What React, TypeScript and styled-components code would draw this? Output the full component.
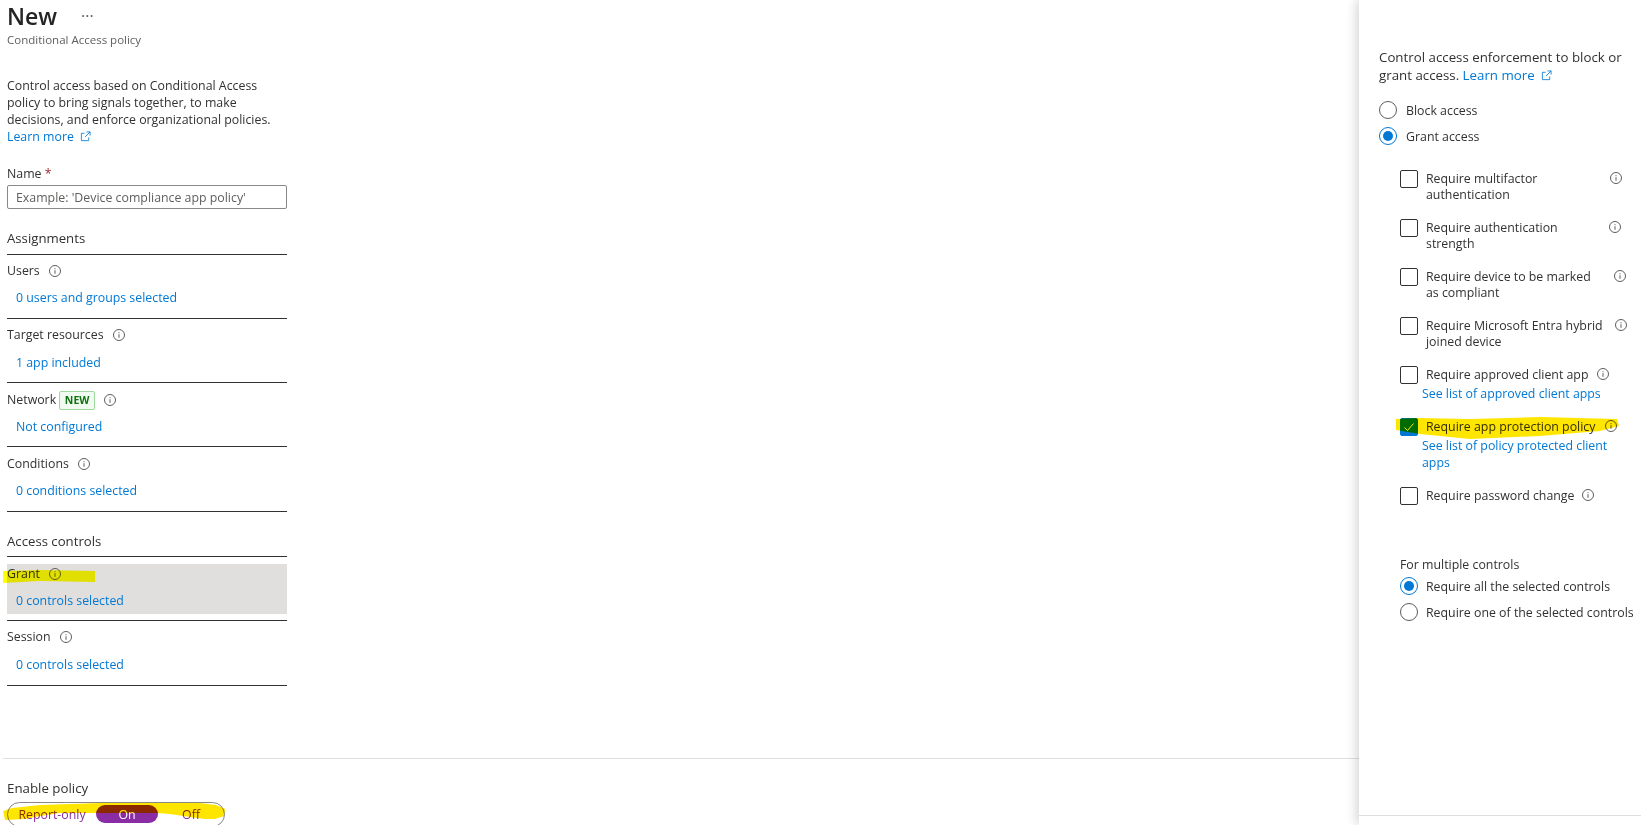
import styled, { createGlobalStyle } from 'styled-components';

const GlobalStyle = createGlobalStyle`
  html, body {
    margin: 0;
    padding: 0;
    height: 100%;
    background: #fff;
  }
  body {
    font-family: "Open Sans", "Noto Sans", sans-serif;
    font-size: 12.35px;
    color: #323130;
    overflow: hidden;
  }
`;

const InfoIcon = () => (
   <InfoSvg viewBox="0 0 12 12">
      <circle cx="6" cy="6" r="5.5" fill="none" stroke="#605e5c" strokeWidth="1" />
      <rect x="5.5" y="5.2" width="1" height="3.6" fill="#605e5c" />
      <rect x="5.5" y="3.2" width="1" height="1" fill="#605e5c" />
   </InfoSvg>
);

const ExternalIcon = () => (
   <ExternalSvg viewBox="0 0 12 12">
      <path
         d="M5 2.5H1.5v8h8V7M7 1h4v4M11 1 5.5 6.5"
         fill="none"
         stroke="#0078d4"
         strokeWidth="0.9"
      />
   </ExternalSvg>
);

const Row = ({ label, value, selected, badge, tall, lift }: {
   label: string;
   value: string;
   selected?: boolean;
   badge?: boolean;
   tall?: boolean;
   lift?: 'label' | 'both';
}) => (
   <SectionRow $tall={tall}>
      <SectionInner $selected={selected} $lifted={!!lift}>
         <RowLabel>
            <span>{label}</span>
            {badge && <NewBadge>NEW</NewBadge>}
            <RowInfo><InfoIcon /></RowInfo>
         </RowLabel>
         <RowValue $wide={lift === 'label'}>{value}</RowValue>
      </SectionInner>
   </SectionRow>
);

const CheckRow = ({ label, width, checked, link }: {
   label: string;
   width: number;
   checked?: boolean;
   link?: string;
}) => (
   <CheckItem>
      <CheckTop>
         <CheckBox $checked={checked}>
            {checked && (
               <svg width="12" height="12" viewBox="0 0 12 12">
                  <path d="M1.5 6.5 4.5 9.5 10.5 2.5" fill="none" stroke="#fff" strokeWidth="1" />
               </svg>
            )}
         </CheckBox>
         <CheckLabel $width={width}>{label}</CheckLabel>
         <CheckInfo><InfoIcon /></CheckInfo>
      </CheckTop>
      {link && <CheckLink>{link}</CheckLink>}
   </CheckItem>
);

const Radio = ({ label, on, loose }: { label: string; on?: boolean; loose?: boolean }) => (
   <RadioRow $loose={loose}>
      <RadioDot $on={on} />
      <span>{label}</span>
   </RadioRow>
);

export default function App() {
   return (
      <Page>
         <GlobalStyle />
         <Main>
            <Content>
               <TitleRow>
                  <Title>New</Title>
                  <More>···</More>
               </TitleRow>
               <Subtitle>Conditional Access policy</Subtitle>
               <Description>
                  Control access based on Conditional Access
                  <br />
                  policy to bring signals together, to make
                  <br />
                  decisions, and enforce organizational policies.
                  <br />
                  <LinkText>Learn more</LinkText>
                  <ExternalIcon />
               </Description>
               <NameLabel>
                  Name <Required>*</Required>
               </NameLabel>
               <NameInput placeholder="Example: 'Device compliance app policy'" />
               <GroupHeading>Assignments</GroupHeading>
               <Row label="Users" value="0 users and groups selected" lift="both" />
               <Row label="Target resources" value="1 app included" lift="label" />
               <Row label="Network" value="Not configured" badge />
               <Row label="Conditions" value="0 conditions selected" tall />
               <GroupHeading $tight>Access controls</GroupHeading>
               <Row label="Grant" value="0 controls selected" selected />
               <Row label="Session" value="0 controls selected" tall lift="label" />
            </Content>
            <Footer>
               <FooterLabel>Enable policy</FooterLabel>
               <PolicyToggle>
                  <ToggleOption $w={88}>Report-only</ToggleOption>
                  <ToggleOption $w={62} $active>On</ToggleOption>
                  <ToggleOption $w={66}>Off</ToggleOption>
               </PolicyToggle>
            </Footer>
         </Main>

         <Panel>
            <PanelBody>
               <PanelIntro>
                  Control access enforcement to block or
                  <br />
                  grant access. <LinkText>Learn more</LinkText>
                  <ExternalIcon />
               </PanelIntro>
               <RadioGroup>
                  <Radio label="Block access" loose />
                  <Radio label="Grant access" on loose />
               </RadioGroup>
               <CheckList>
                  <CheckRow label={'Require multifactor\nauthentication'} width={184} />
                  <CheckRow label={'Require authentication\nstrength'} width={183} />
                  <CheckRow label={'Require device to be marked\nas compliant'} width={188} />
                  <CheckRow label={'Require Microsoft Entra hybrid\njoined device'} width={189} />
                  <CheckRow
                     label="Require approved client app"
                     width={171}
                     link="See list of approved client apps"
                  />
                  <CheckRow
                     label="Require app protection policy"
                     width={179}
                     checked
                     link="See list of policy protected client apps"
                  />
                  <CheckRow label="Require password change" width={156} />
               </CheckList>
               <MultiSection>
                  <MultiLabel>For multiple controls</MultiLabel>
                  <RadioGroup>
                     <Radio label="Require all the selected controls" on />
                     <Radio label="Require one of the selected controls" />
                  </RadioGroup>
               </MultiSection>
            </PanelBody>
            <PanelFooter />
         </Panel>

         <Highlights viewBox="0 0 1641 825">
            <GrantMark d="M3 571 L40 570 L95 571 L95 582 L40 581 L3 583 Z" />
            <path d="M3 811 L12 808 L40 805 L100 803 L200 803 L216 805 L225 809 L224 816 L215 819 L205 819 L190 817 L170 814 L157 813 L60 813 L40 816 L25 819 L5 820 Z" />
            <path d="M1396 419 L1418 418 L1470 419 L1540 417 L1617 419 L1619 426 L1600 431 L1540 436 L1470 439 L1420 434 L1396 430 Z" />
         </Highlights>
      </Page>
   );
}

const Page = styled.div`
   position: relative;
   display: flex;
   width: 100%;
   height: 825px;
   overflow: hidden;
   background: #fff;
`;

const Main = styled.main`
   flex: 1;
   min-width: 0;
   display: flex;
   flex-direction: column;
   justify-content: space-between;
`;

const Content = styled.div`
   width: 280px;
   margin-left: 7px;
`;

const TitleRow = styled.div`
   display: flex;
   align-items: center;
   height: 32px;
`;

const Title = styled.h1`
   margin: 0;
   font-size: 23px;
   font-weight: 600;
   line-height: 32px;
   color: #242424;
`;

const More = styled.span`
   margin-left: 24px;
   font-size: 16px;
   line-height: 32px;
   color: #605e5c;
`;

const Subtitle = styled.div`
   font-size: 11.5px;
   line-height: 16px;
   color: #605e5c;
`;

const Description = styled.p`
   margin: 29px 0 0;
   line-height: 17px;
   white-space: nowrap;
`;

const LinkText = styled.span`
   color: #0078d4;
`;

const ExternalSvg = styled.svg`
   width: 11px;
   height: 11px;
   margin-left: 6px;
   vertical-align: -1px;
`;

const InfoSvg = styled.svg`
   display: block;
   flex: none;
   width: 12px;
   height: 12px;
`;

const NameLabel = styled.div`
   margin-top: 19px;
   padding-top: 1px;
   height: 17px;
   line-height: 18px;
`;

const Required = styled.span`
   color: #a4262c;
`;

const NameInput = styled.input`
   display: block;
   box-sizing: border-box;
   width: 280px;
   height: 24px;
   margin-top: 3px;
   padding: 0 8px;
   border: 1px solid #8a8886;
   border-radius: 2px;
   outline: none;
   font: inherit;
   color: #323130;
   &::placeholder {
      color: #605e5c;
      opacity: 1;
   }
`;

const GroupHeading = styled.h2<{ $tight?: boolean }>`
   margin: 20px 0 0;
   padding-bottom: ${({ $tight }) => ($tight ? 6 : 7)}px;
   border-bottom: 1px solid #323130;
   font-size: 13.2px;
   font-weight: 400;
   line-height: 18px;
`;

const SectionRow = styled.div<{ $tall?: boolean }>`
   padding: 7px 0 ${({ $tall }) => ($tall ? 7 : 6)}px;
   border-bottom: 1px solid #323130;
`;

const SectionInner = styled.div<{ $selected?: boolean; $lifted?: boolean }>`
   box-sizing: border-box;
   height: 50px;
   padding-top: ${({ $lifted }) => ($lifted ? 0 : 1)}px;
   background: ${({ $selected }) => ($selected ? '#e1dfdd' : 'transparent')};
`;

const RowLabel = styled.div`
   display: flex;
   align-items: center;
   height: 18px;
   line-height: 18px;
`;

const RowInfo = styled.span`
   margin-left: 9px;
`;

const NewBadge = styled.span`
   box-sizing: border-box;
   display: flex;
   align-items: center;
   justify-content: center;
   width: 36px;
   height: 19px;
   margin-left: 3px;
   border: 1px solid #9fd89f;
   border-radius: 2px;
   background: #f1faf1;
   color: #0e700e;
   font-size: 10.5px;
   font-weight: 700;
`;

const RowValue = styled.div<{ $wide?: boolean }>`
   margin-top: ${({ $wide }) => ($wide ? 10 : 9)}px;
   padding-left: 9px;
   line-height: 18px;
   color: #0078d4;
`;

const Footer = styled.footer`
   height: 67px;
   margin-left: 3px;
   padding-left: 4px;
   border-top: 1px solid #e1dfdd;
   box-sizing: border-box;
`;

const FooterLabel = styled.div`
   margin-top: 20px;
   height: 18px;
   font-size: 13.3px;
   line-height: 18px;
`;

const PolicyToggle = styled.div`
   box-sizing: border-box;
   display: flex;
   align-items: center;
   width: 218px;
   height: 25px;
   margin-top: 5px;
   padding: 2px 0 3px 0;
   border: 1px solid #8a8886;
   border-radius: 13px;
`;

const ToggleOption = styled.div<{ $w: number; $active?: boolean }>`
   display: flex;
   align-items: center;
   justify-content: center;
   width: ${({ $w }) => $w}px;
   height: 18px;
   border-radius: 9px;
   background: ${({ $active }) => ($active ? '#8a2da5' : 'transparent')};
   color: ${({ $active }) => ($active ? '#fff' : '#8a2da5')};
`;

const Panel = styled.aside`
   position: relative;
   flex: none;
   width: 282px;
   display: flex;
   flex-direction: column;
   background: #fff;
   box-shadow: -3px 0 10px rgba(0, 0, 0, 0.16);
`;

const PanelBody = styled.div`
   flex: 1;
   padding: 48px 0 0 20px;
`;

const PanelFooter = styled.div`
   height: 9px;
   border-top: 1px solid #e1dfdd;
`;

const PanelIntro = styled.p`
   margin: 0 0 17px;
   font-size: 13.3px;
   line-height: 18px;
   white-space: nowrap;
`;

const RadioGroup = styled.div`
   display: flex;
   flex-direction: column;
   gap: 8px;
`;

const RadioRow = styled.div<{ $loose?: boolean }>`
   display: flex;
   align-items: center;
   gap: ${({ $loose }) => ($loose ? 9 : 8)}px;
   height: 18px;
   white-space: nowrap;
`;

const RadioDot = styled.span<{ $on?: boolean }>`
   box-sizing: border-box;
   display: flex;
   align-items: center;
   justify-content: center;
   width: 18px;
   height: 18px;
   border-radius: 50%;
   border: 1px solid ${({ $on }) => ($on ? '#0078d4' : '#605e5c')};
   &::after {
      content: '';
      display: ${({ $on }) => ($on ? 'block' : 'none')};
      width: 10px;
      height: 10px;
      border-radius: 50%;
      background: #0078d4;
   }
`;

const CheckList = styled.div`
   display: flex;
   flex-direction: column;
   gap: 17px;
   margin: 25px 0 0 21px;
`;

const CheckItem = styled.div`
   display: flex;
   flex-direction: column;
`;

const CheckTop = styled.div`
   display: flex;
   align-items: flex-start;
`;

const CheckBox = styled.span<{ $checked?: boolean }>`
   box-sizing: border-box;
   flex: none;
   display: flex;
   align-items: center;
   justify-content: center;
   width: 18px;
   height: 18px;
   border-radius: 2px;
   border: 1px solid ${({ $checked }) => ($checked ? '#0078d4' : '#323130')};
   background: ${({ $checked }) => ($checked ? '#0078d4' : '#fff')};
`;

const CheckLabel = styled.div<{ $width: number }>`
   width: ${({ $width }) => $width}px;
   margin: 1px 0 -1px 8px;
   line-height: 16px;
   white-space: pre;
`;

const CheckInfo = styled.span`
   margin-top: 2px;
`;

const CheckLink = styled.div`
   width: 190px;
   margin: 1px 0 -1px 22px;
   line-height: 17px;
   color: #0078d4;
`;

const MultiSection = styled.div`
   margin: 51px 0 0 21px;
`;

const MultiLabel = styled.div`
   margin-bottom: 3px;
   line-height: 18px;
`;

const Highlights = styled.svg`
   position: absolute;
   top: 0;
   left: 0;
   width: 1641px;
   height: 825px;
   fill: #ffe600;
   mix-blend-mode: multiply;
   pointer-events: none;
`;

const GrantMark = styled.path`
   fill: #ffff00;
`;
